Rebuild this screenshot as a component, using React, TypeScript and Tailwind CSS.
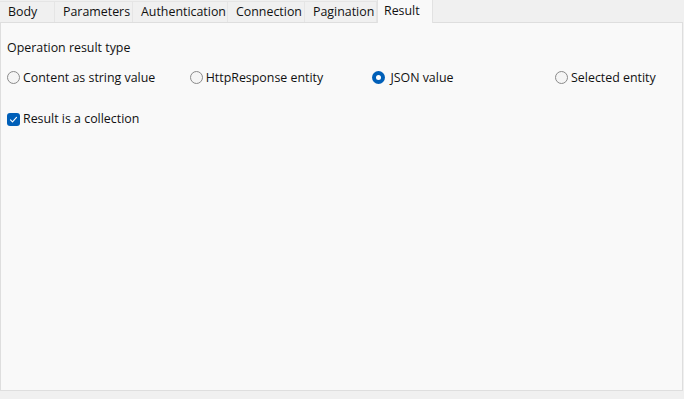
import React from 'react';

const tabs = [
  { label: 'Body', w: 'w-[55px]' },
  { label: 'Parameters', w: 'w-[78px]' },
  { label: 'Authentication', w: 'w-[95px]' },
  { label: 'Connection', w: 'w-[77px]' },
  { label: 'Pagination', w: 'w-[72px]' },
];

const options = ['Content as string value', 'HttpResponse entity', 'JSON value', 'Selected entity'];

function Radio({ checked }: { checked: boolean }) {
  return checked ? (
    <span className="flex h-[13px] w-[13px] items-center justify-center rounded-full bg-[#005fb8]">
      <span className="h-[5px] w-[5px] rounded-full bg-white" />
    </span>
  ) : (
    <span className="h-[13px] w-[13px] rounded-full border border-[#8a8a8a] bg-[#f5f5f5]" />
  );
}

export default function App() {
  return (
    <div
      className="h-[399px] w-[684px] overflow-hidden bg-[#f0f0f0] text-[12.4px] text-[#111111]"
      style={{ fontFamily: '"Open Sans", "Noto Sans", sans-serif' }}
    >
      {/* Tab strip */}
      <div className="flex h-[22px] items-end">
        {tabs.map((t) => (
          <div
            key={t.label}
            className={`${t.w} flex h-[21px] items-center border-t border-r border-[#e5e5e5] bg-[#f0f0f0] pl-[8px] pt-[1px]`}
          >
            {t.label}
          </div>
        ))}
        <div className="relative z-10 -mb-px flex h-[23px] w-[56px] items-start border-x border-[#e2e2e2] bg-[#f9f9f9] pl-[6px] pt-[2px]">
          Result
        </div>
      </div>

      {/* Panel */}
      <div className="h-[369px] w-[683px] border border-[#dedede] bg-[#f9f9f9] px-[6px]">
        <div className="pt-[16px]">Operation result type</div>
        <div className="mt-[11px] flex">
          {options.map((o, i) => (
            <label
              key={o}
              className={`flex ${i < 3 ? 'w-[182.7px]' : ''} shrink-0 items-center gap-[3px]`}
            >
              <Radio checked={i === 2} />
              <span className={i === 2 ? 'ml-[2px]' : ''}>{o}</span>
            </label>
          ))}
        </div>
        <label className="mt-[23px] flex items-center gap-[3px]">
          <span className="flex h-[13px] w-[13px] items-center justify-center rounded-[3px] bg-[#005fb8]">
            <svg width="9" height="9" viewBox="0 0 9 9" fill="none">
              <path d="M1.5 4.8 L3.5 6.8 L7.5 2.3" stroke="white" strokeWidth="1.1" strokeLinecap="round" strokeLinejoin="round" />
            </svg>
          </span>
          <span>Result is a collection</span>
        </label>
      </div>
    </div>
  );
}
